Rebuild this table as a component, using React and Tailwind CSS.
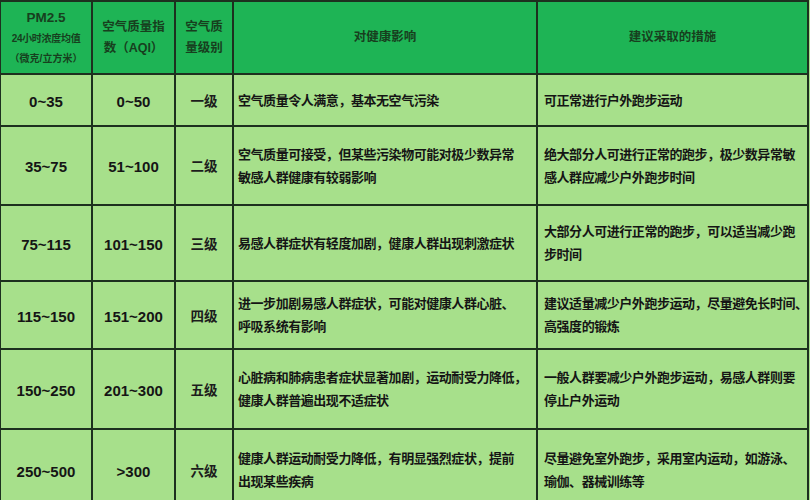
const rows = [
  {
    pm: "0~35", aqi: "0~50", level: "一级", h: "h-[50px]",
    effect: ["空气质量令人满意，基本无空气污染"],
    advice: ["可正常进行户外跑步运动"],
  },
  {
    pm: "35~75", aqi: "51~100", level: "二级", h: "h-[77px]",
    effect: ["空气质量可接受，但某些污染物可能对极少数异常", "敏感人群健康有较弱影响"],
    advice: ["绝大部分人可进行正常的跑步，极少数异常敏", "感人群应减少户外跑步时间"],
  },
  {
    pm: "75~115", aqi: "101~150", level: "三级", h: "h-[74px]",
    effect: ["易感人群症状有轻度加剧，健康人群出现刺激症状"],
    advice: ["大部分人可进行正常的跑步，可以适当减少跑", "步时间"],
  },
  {
    pm: "115~150", aqi: "151~200", level: "四级", h: "h-[66px]",
    effect: ["进一步加剧易感人群症状，可能对健康人群心脏、", "呼吸系统有影响"],
    advice: ["建议适量减少户外跑步运动，尽量避免长时间、", "高强度的锻炼"],
  },
  {
    pm: "150~250", aqi: "201~300", level: "五级", h: "h-[78px]",
    effect: ["心脏病和肺病患者症状显著加剧，运动耐受力降低，", "健康人群普遍出现不适症状"],
    advice: ["一般人群要减少户外跑步运动，易感人群则要", "停止户外运动"],
  },
  {
    pm: "250~500", aqi: ">300", level: "六级", h: "h-[80px]",
    effect: ["健康人群运动耐受力降低，有明显强烈症状，提前", "出现某些疾病"],
    advice: ["尽量避免室外跑步，采用室内运动，如游泳、", "瑜伽、器械训练等"],
  },
];

const font = "font-['Liberation_Sans','Noto_Sans_CJK_SC',sans-serif]";

function Head({ children, className = "" }) {
  return (
    <div className={`bg-[#1eb455] flex flex-col items-center justify-center text-center text-[#173f1e] font-bold ${className}`}>
      {children}
    </div>
  );
}

function Lines({ items, pad }) {
  return (
    <div className={`bg-[#a7e08b] flex flex-col justify-center ${pad} text-[13px] leading-[23px] font-bold text-[#151515] tracking-[-0.45px] whitespace-nowrap`}>
      {items.map((t) => (
        <div key={t}>{t}</div>
      ))}
    </div>
  );
}

export default function App() {
  return (
    <div className={`w-[810px] h-[500px] overflow-hidden bg-[#a7e08b] ${font}`}>
      <div className="grid grid-cols-[90px_81px_56px_302px_269px] gap-[2px] bg-[#1d301f] pt-[2px] pl-[1px] pr-[2px] w-[809px]">
        <Head className="h-[71px]">
          <div className="text-[13.5px] leading-[22px]">PM2.5</div>
          <div className="text-[10px] leading-[20px] tracking-[-0.3px]">24小时浓度均值</div>
          <div className="text-[10px] leading-[19px]">（微克/立方米）</div>
        </Head>
        <Head className="text-[12.5px] leading-[21px] pt-[1px]">
          <div>空气质量指</div>
          <div>数（AQI）</div>
        </Head>
        <Head className="text-[12.5px] leading-[21px] pt-[1px]">
          <div>空气质</div>
          <div>量级别</div>
        </Head>
        <Head className="text-[12.5px]">对健康影响</Head>
        <Head className="text-[12.5px]">建议采取的措施</Head>

        {rows.map((r) => (
          <div key={r.pm} className="contents">
            <div className={`bg-[#a7e08b] flex items-center justify-center text-[15px] font-bold text-[#151515] pt-[4px] ${r.h}`}>{r.pm}</div>
            <div className="bg-[#a7e08b] flex items-center justify-center text-[15px] font-bold text-[#151515] pt-[4px]">{r.aqi}</div>
            <div className="bg-[#a7e08b] flex items-center justify-center text-[13.5px] font-bold text-[#1c1c1c] pt-[4px]">{r.level}</div>
            <Lines items={r.effect} pad="pl-[4px]" />
            <Lines items={r.advice} pad="pl-[6px]" />
          </div>
        ))}
      </div>
    </div>
  );
}
